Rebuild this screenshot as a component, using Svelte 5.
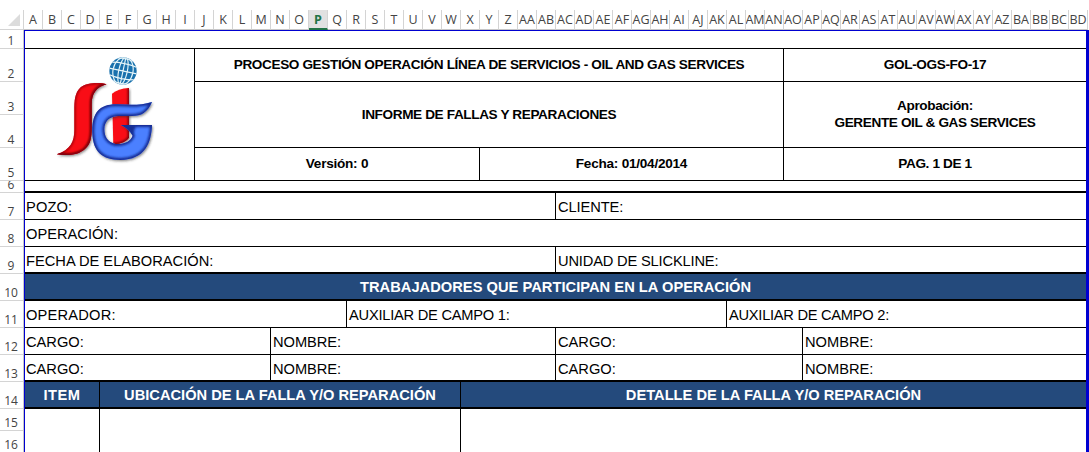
<script>
  const letters = 'ABCDEFGHIJKLMNOPQRSTUVWXYZ';
  const columns = Array.from({ length: 56 }, (_, i) =>
    i < 26 ? letters[i] : letters[Math.floor(i / 26) - 1] + letters[i % 26]
  );
  const rowHeights = [18, 33, 33, 33, 33, 12, 27, 27, 27, 27, 27, 27, 27, 27, 22, 22];

  // Each cell: text, width in px, optional tracking in px
  const fields = [
    { cells: [['POZO:', 531, 0.1], ['CLIENTE:', 530, -0.1]] },
    { cells: [['OPERACIÓN:', 1061]] },
    { cells: [['FECHA DE ELABORACIÓN:', 531], ['UNIDAD DE SLICKLINE:', 530, -0.17]], thick: true },
    { cells: [['TRABAJADORES QUE PARTICIPAN EN LA OPERACIÓN', 1061, 0.03]], thick: true, band: true },
    { cells: [['OPERADOR:', 322, 0.2], ['AUXILIAR DE CAMPO 1:', 380, -0.24], ['AUXILIAR DE CAMPO 2:', 359, -0.27]] },
    { cells: [['CARGO:', 246], ['NOMBRE:', 285, -0.05], ['CARGO:', 247], ['NOMBRE:', 283]] },
    { cells: [['CARGO:', 246], ['NOMBRE:', 285, -0.05], ['CARGO:', 247], ['NOMBRE:', 283]], thick: true },
    { cells: [['ITEM', 75, 0.5], ['UBICACIÓN DE LA FALLA Y/O REPARACIÓN', 361], ['DETALLE DE LA FALLA Y/O REPARACIÓN', 625]], thick: true, band: true }
  ];

  const sPath = 'M158 85C140 79 100 78 80 94C62 110 61 136 61 162V222C61 256 50 281 8 295C40 300 72 298 93 279C110 263 113 245 113 215V145C113 114 126 93 158 85Z';
  const iPath = 'M174 113Q192 98 225 96V245Q215 262 178 265Z';
  const gPath = 'M294 138C280 170 262 180 234 180H192C166 181 151 197 151 219C151 243 161 258 184 264C210 266 230 256 236 239C228 225 217 214 200 207H294C292 260 274 311 199 312C145 312 117 287 115 232C113 170 136 144 190 145C232 147 264 148 294 138Z';
</script>

<div class="app">
  <div class="colbar">
    <div class="corner"><svg width="12" height="12" viewBox="0 0 12 12"><path d="M12 0V12H0Z" fill="#dcdcdc" /></svg></div>
    {#each columns as c}
      <div class="col" class:active={c === 'P'}><span>{c}</span></div>
    {/each}
  </div>

  <div class="main">
    <div class="gutter">
      {#each rowHeights as h, i}
        <div class="num" style="height:{h}px"><span>{i + 1}</span></div>
      {/each}
    </div>

    <div class="sheet">
      <div class="spacer first"></div>
      <div class="head">
        <div class="logo">
          <svg width="130" height="126" viewBox="-42 -21 390 378">
            <defs>
              <filter id="shadow" x="-20%" y="-20%" width="140%" height="140%">
                <feDropShadow dx="3" dy="4" stdDeviation="3" flood-color="#333" flood-opacity=".55" />
              </filter>
              <filter id="soft" x="-20%" y="-20%" width="140%" height="140%"><feGaussianBlur stdDeviation="3" /></filter>
              <clipPath id="globe"><circle cx="207" cy="45" r="41" /></clipPath>
              <clipPath id="cs"><path d={sPath} /></clipPath>
              <clipPath id="ci"><path d={iPath} /></clipPath>
              <clipPath id="cg"><path d={gPath} /></clipPath>
            </defs>
            <circle cx="207" cy="45" r="41" fill="#1971ad" />
            <g clip-path="url(#globe)" fill="none" stroke="#e4f4f8" stroke-width="3.5" transform="rotate(12 207 45)">
              <ellipse cx="207" cy="45" rx="13" ry="42" />
              <ellipse cx="207" cy="45" rx="30" ry="42" />
              <path d="M207 3V87M165 45H249M168 26Q207 18 246 26M168 64Q207 72 246 64M180 11Q207 4 234 11M180 79Q207 86 234 79" />
            </g>
            <path filter="url(#shadow)" fill="#f90f12" d={iPath} />
            <g clip-path="url(#ci)"><path filter="url(#soft)" fill="none" stroke="#76000a" stroke-width="14" d="M228 94V245Q215 266 178 268" /></g>
            <path filter="url(#shadow)" fill="#f90f12" d={sPath} />
            <g clip-path="url(#cs)">
              <path filter="url(#soft)" fill="none" stroke="#a3000a" stroke-width="8" d={sPath} />
              <path filter="url(#soft)" fill="none" stroke="#76000a" stroke-width="14" d="M158 87C128 94 115 114 115 145V215C115 245 112 263 95 281C74 300 40 302 8 296" />
            </g>
            <path filter="url(#shadow)" fill="#4b80ff" d={gPath} />
            <g clip-path="url(#cg)">
              <path filter="url(#soft)" fill="none" stroke="#122b91" stroke-width="12" d={gPath} />
              <path filter="url(#soft)" fill="#142d94" d="M200 207H246L236 240Q223 220 200 207Z" />
            </g>
          </svg>
        </div>
        <div class="titles">
          <div class="title t1"><span>PROCESO GESTIÓN OPERACIÓN LÍNEA DE SERVICIOS - OIL AND GAS SERVICES</span></div>
          <div class="title t2"><span>INFORME DE FALLAS Y REPARACIONES</span></div>
          <div class="pair">
            <div class="title v"><span>Versión: 0</span></div>
            <div class="title f"><span>Fecha: 01/04/2014</span></div>
          </div>
        </div>
        <div class="meta">
          <div class="title t1"><span>GOL-OGS-FO-17</span></div>
          <div class="title t2 two"><span>Aprobación:<br />GERENTE OIL &amp; GAS SERVICES</span></div>
          <div class="title t3"><span>PAG. 1 DE 1</span></div>
        </div>
      </div>
      <div class="spacer second"></div>
      {#each fields as row}
        <div class="row" class:thick={row.thick} class:band={row.band}>
          {#each row.cells as [text, w, ls = 0]}
            <div class="cell" style="width:{w}px;letter-spacing:{ls}px"><span>{text}</span></div>
          {/each}
        </div>
      {/each}
      <div class="row blank">
        <div class="cell" style="width:75px"></div>
        <div class="cell" style="width:361px"></div>
        <div class="cell" style="width:625px"></div>
      </div>
    </div>
  </div>
</div>

<style>
  :global(body) { background: #fff; overflow: hidden; }
  .app, .app * { box-sizing: border-box; }
  .app { width: 1089px; height: 452px; overflow: hidden; padding-top: 10px; font-family: "Liberation Sans", Arial, sans-serif; color: #000; }
  .colbar { display: flex; height: 20px; }
  .corner { width: 24px; flex: none; border-right: 1px solid #d4d4d4; border-bottom: 1px solid #d4d4d4; padding: 4px 0 0 8px; }
  .corner svg { display: block; }
  .col { width: 19px; flex: none; border-right: 1px solid #d4d4d4; border-bottom: 1px solid #c6c6c6; display: flex; justify-content: center; font: 12.5px/19px "Open Sans", "Noto Sans", sans-serif; color: #444; white-space: nowrap; overflow: hidden; }
  .col.active { background: #e1e1e1; color: #217346; font-weight: 700; border-bottom: 2px solid #217346; }
  .main { display: flex; height: 422px; }
  .gutter { width: 24px; flex: none; border-right: 1px solid #c6c6c6; padding-top: 1px; }
  .num { border-bottom: 1px solid #d4d4d4; display: flex; align-items: flex-end; justify-content: center; font: 12px/15px "Open Sans", "Noto Sans", sans-serif; color: #444; padding-right: 1px; overflow: hidden; }
  .sheet { width: 1065px; border: solid #0000d0; border-width: 1px 3px 0 1px; display: flex; flex-direction: column; overflow: hidden; }
  .spacer { flex: none; border-bottom: 1px solid #000; }
  .first { height: 18px; }
  .second { height: 12px; border-bottom-width: 2px; }
  .head { display: flex; flex: none; height: 132px; border-bottom: 1px solid #000; }
  .logo { width: 170px; border-right: 1px solid #000; padding-left: 15px; }
  .logo svg { display: block; }
  .titles { width: 589px; border-right: 1px solid #000; }
  .meta { width: 302px; }
  .title { display: flex; align-items: center; justify-content: center; text-align: center; font-weight: 700; font-size: 13.6px; line-height: 17px; letter-spacing: -0.38px; white-space: nowrap; }
  .t1 { height: 33px; border-bottom: 1px solid #000; padding-bottom: 2px; }
  .t2 { height: 66px; border-bottom: 1px solid #000; }
  .two { padding-bottom: 2px; }
  .t3 { height: 32px; padding-bottom: 2px; }
  .pair { display: flex; height: 32px; }
  .v, .f { padding-bottom: 2px; letter-spacing: -0.25px; }
  .v { width: 285px; border-right: 1px solid #000; }
  .f { width: 303px; }
  .row { display: flex; flex: none; height: 27px; border-bottom: 1px solid #000; }
  .row.thick { border-bottom-width: 2px; }
  .row.blank { height: 43px; border-bottom: 0; }
  .cell { flex: none; border-right: 1px solid #000; padding: 5px 0 0 2px; font-size: 14.67px; line-height: 19px; white-space: nowrap; }
  .cell:first-child { padding-left: 1px; }
  .cell:last-child { border-right: 0; }
  .band { background: #244a7c; color: #fff; font-weight: 700; }
  .band .cell { text-align: center; padding: 4px 0 0; }
</style>
